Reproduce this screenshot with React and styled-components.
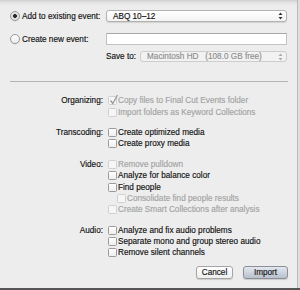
import React from "react"
import styled, { createGlobalStyle } from "styled-components"

const GlobalStyle = createGlobalStyle`
  html, body {
    margin: 0;
    padding: 0;
    background: #5c5c5c;
  }
  body {
    font-family: "Liberation Sans", "DejaVu Sans", sans-serif;
    font-size: 8.2px;
    color: #111;
    -webkit-text-stroke: 0.15px currentColor;
  }
`

const Screen = styled.div`
  width: 300px;
  height: 290px;
  overflow: hidden;
  display: flex;
  flex-direction: column;
`

const Sheet = styled.div`
  height: 288px;
  display: flex;
  background: #dedede;
`

const Panel = styled.div`
  width: 297px;
  border-right: 1px solid #b9b9b9;
  background: linear-gradient(to bottom, #cfcfcf 0px, #e6e6e6 3px, #ededed 6px, #ededed 100%);
  display: flex;
  flex-direction: column;
`

const BottomBar = styled.div`
  height: 2px;
  background: #555;
`

const EventSection = styled.div`
  display: flex;
  flex-direction: column;
  padding: 10px 10px 0 10px;
`

const EventRow = styled.div`
  display: grid;
  grid-template-columns: 96px 1fr;
  align-items: center;
  height: ${p => p.$h}px;
  margin-top: ${p => p.$top || 0}px;
`

const RadioLabel = styled.label`
  display: flex;
  align-items: center;
  gap: 2px;
  white-space: nowrap;
`

const Radio = styled.span`
  flex: none;
  width: 10px;
  height: 10px;
  box-sizing: border-box;
  border-radius: 50%;
  border: 1px solid #9a9a9a;
  background: ${p => p.$on
    ? "radial-gradient(circle, #2a2a2a 0 1.6px, #d8d8d8 2.2px, #f4f4f4 100%)"
    : "linear-gradient(to bottom, #ffffff, #ececec)"};
  box-shadow: 0 0.5px 0.5px rgba(0,0,0,0.15);
`

const Popup = styled.div`
  height: ${p => p.$disabled ? 11 : 12}px;
  box-sizing: border-box;
  border: 1px solid ${p => p.$disabled ? "#cdcdcd" : "#b2b2b2"};
  border-radius: 3px;
  background: ${p => p.$disabled ? "#f2f2f2" : "linear-gradient(to bottom, #ffffff, #f3f3f3)"};
  color: ${p => p.$disabled ? "#8e8e8e" : "#111"};
  display: flex;
  align-items: center;
  justify-content: space-between;
  padding: 0 3px 0 6px;
  box-shadow: ${p => p.$disabled ? "none" : "0 1px 1px rgba(0,0,0,0.12)"};
  flex: 1;
  white-space: pre;
`

const TextField = styled.div`
  height: 12px;
  box-sizing: border-box;
  border: 1px solid #c2c2c2;
  border-top-color: #a8a8a8;
  background: #fff;
`

const SaveRow = styled.div`
  display: flex;
  align-items: center;
  gap: 4px;
  white-space: nowrap;
`

const Separator = styled.div`
  height: 1px;
  background: #b4b4b4;
  margin: 19px 9px 0 10px;
`

const OptionsGrid = styled.div`
  display: grid;
  grid-template-columns: 93px 1fr;
  column-gap: 5px;
  padding: 13px 10px 0 10px;
`

const Group = styled.div`
  display: contents;
`

const GroupLabel = styled.div`
  text-align: right;
  height: 11.4px;
  line-height: 11.4px;
  margin-top: ${p => p.$first ? 0 : 9}px;
  white-space: nowrap;
`

const GroupItems = styled.div`
  display: flex;
  flex-direction: column;
  margin-top: ${p => p.$first ? 0 : 9}px;
`

const Option = styled.div`
  display: flex;
  align-items: center;
  gap: 1px;
  height: 11.4px;
  padding-left: ${p => p.$indent ? 9 : 0}px;
  color: ${p => p.$disabled ? "#a3a3a3" : "#111"};
  white-space: nowrap;
`

const Box = styled.span`
  position: relative;
  width: 9px;
  height: 9px;
  box-sizing: border-box;
  border: 1px solid ${p => p.$disabled ? "#d0d0d0" : "#9b9b9b"};
  border-radius: 1.5px;
  background: ${p => p.$disabled ? "#f6f6f6" : "linear-gradient(to bottom, #ffffff, #eeeeee)"};
  flex: none;
`

const Check = styled.svg`
  position: absolute;
  left: 0px;
  top: -3px;
`

const Footer = styled.div`
  margin-top: auto;
  display: flex;
  justify-content: flex-end;
  gap: 10px;
  padding: 0 9px 9px 0;
`

const Button = styled.button`
  font: inherit;
  color: #111;
  height: 13px;
  padding: 0;
  width: ${p => p.$w}px;
  box-sizing: border-box;
  border: 1px solid ${p => p.$primary ? "#8a8f99" : "#a5a5a5"};
  border-radius: 3px;
  background: ${p => p.$primary
    ? "linear-gradient(to bottom, #e3e7ee, #b9c0cc)"
    : "linear-gradient(to bottom, #ffffff, #eeeeee)"};
  box-shadow: 0 1px 1px rgba(0,0,0,0.15);
  display: flex;
  align-items: center;
  justify-content: center;
`

const Arrows = ({ color }) => (
  <svg width="5" height="8" viewBox="0 0 5 8">
    <path d="M0.5 3 L2.5 0.5 L4.5 3 Z M0.5 5 L2.5 7.5 L4.5 5 Z" fill={color} />
  </svg>
)

const groups = [
  {
    label: "Organizing:",
    items: [
      { text: "Copy files to Final Cut Events folder", disabled: true, checked: true },
      { text: "Import folders as Keyword Collections", disabled: true },
    ],
  },
  {
    label: "Transcoding:",
    items: [
      { text: "Create optimized media" },
      { text: "Create proxy media" },
    ],
  },
  {
    label: "Video:",
    items: [
      { text: "Remove pulldown", disabled: true },
      { text: "Analyze for balance color" },
      { text: "Find people" },
      { text: "Consolidate find people results", disabled: true, indent: true },
      { text: "Create Smart Collections after analysis", disabled: true },
    ],
  },
  {
    label: "Audio:",
    items: [
      { text: "Analyze and fix audio problems" },
      { text: "Separate mono and group stereo audio" },
      { text: "Remove silent channels" },
    ],
  },
]

export default function App() {
  return (
    <Screen>
      <GlobalStyle />
      <Sheet>
        <Panel>
          <EventSection>
            <EventRow $h={12}>
              <RadioLabel><Radio $on /> Add to existing event:</RadioLabel>
              <Popup>ABQ 10–12<Arrows color="#333" /></Popup>
            </EventRow>
            <EventRow $h={12} $top={11}>
              <RadioLabel><Radio /> Create new event:</RadioLabel>
              <TextField />
            </EventRow>
            <EventRow $h={11} $top={6}>
              <div />
              <SaveRow>
                <span>Save to:</span>
                <Popup $disabled>{"Macintosh HD   (108.0 GB free)"}<Arrows color="#aaa" /></Popup>
              </SaveRow>
            </EventRow>
          </EventSection>
          <Separator />
          <OptionsGrid>
            {groups.map((g, gi) => (
              <Group key={g.label}>
                <GroupLabel $first={gi === 0}>{g.label}</GroupLabel>
                <GroupItems $first={gi === 0}>
                  {g.items.map(it => (
                    <Option key={it.text} $disabled={it.disabled} $indent={it.indent}>
                      <Box $disabled={it.disabled}>
                        {it.checked && (
                          <Check width="10" height="11" viewBox="0 0 10 11">
                            <path d="M1.5 6.5 L3.8 9.5 L8.5 1" stroke="#9a9a9a" strokeWidth="1.3" fill="none" />
                          </Check>
                        )}
                      </Box>
                      {it.text}
                    </Option>
                  ))}
                </GroupItems>
              </Group>
            ))}
          </OptionsGrid>
          <Footer>
            <Button $w={37}>Cancel</Button>
            <Button $w={45} $primary>Import</Button>
          </Footer>
        </Panel>
      </Sheet>
      <BottomBar />
    </Screen>
  )
}
